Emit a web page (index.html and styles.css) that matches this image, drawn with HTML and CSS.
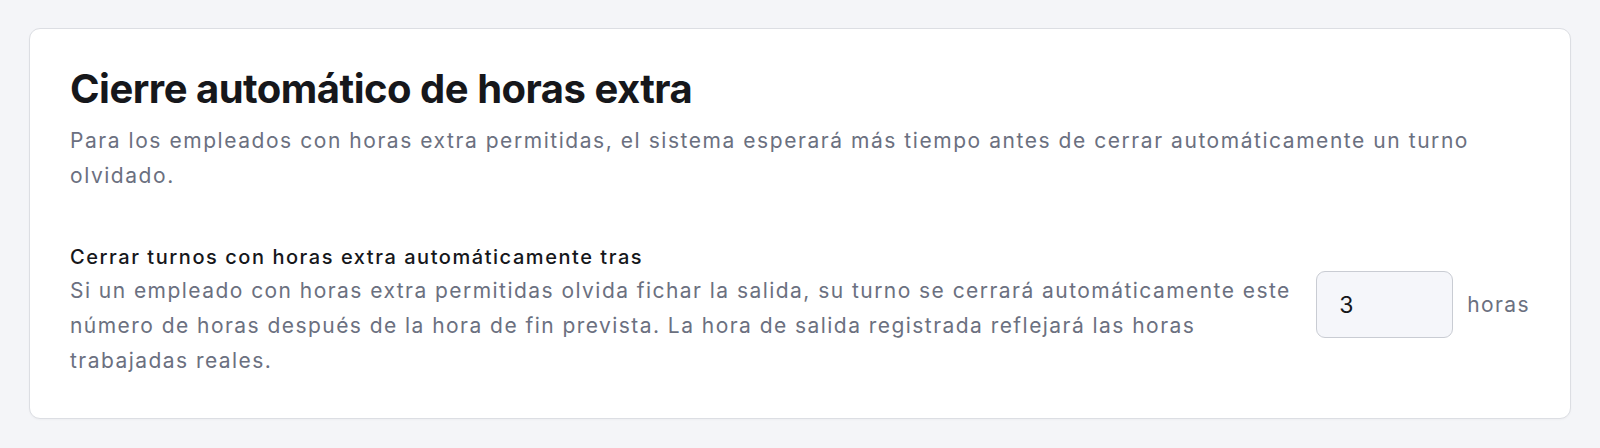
FILE: index.html
```html
<!DOCTYPE html>
<html lang="es">
<head>
    <meta charset="UTF-8">
    <meta name="viewport" content="width=device-width, initial-scale=1.0">
    <title>Cierre automático de horas extra</title>
    <link rel="stylesheet" href="styles.css">
</head>
<body>

    <div class="card">
        <h1>Cierre automático de horas extra</h1>
        <p class="card-desc">Para los empleados con horas extra permitidas, el sistema esperará más tiempo antes de cerrar automáticamente un turno olvidado.</p>

        <div class="setting-row">
            <div class="setting-text">
                <div class="setting-label">Cerrar turnos con horas extra automáticamente tras</div>
                <div class="setting-help">Si un empleado con horas extra permitidas olvida fichar la salida, su turno se cerrará automáticamente este número de horas después de la hora de fin prevista. La hora de salida registrada reflejará las horas trabajadas reales.</div>
            </div>
            <input type="text" class="hours-input" value="3">
            <span class="unit">horas</span>
        </div>
    </div>

</body>
</html>
```

FILE: styles.css
```css
body {
    font-family: 'Inter', 'Liberation Sans', sans-serif;
    background-color: #f4f5f8;
    color: #16171b;
    margin: 0;
    padding: 28px 29px;
}

.card {
    background-color: #fff;
    border: 1px solid #dcdee3;
    border-radius: 11px;
    padding: 36px 40px 40px 40px;
    box-shadow: 0 1px 2px rgba(0, 0, 0, 0.03);
}

h1 {
    margin: 0;
    font-size: 40px;
    font-weight: 700;
    line-height: 48px;
    letter-spacing: -0.5px;
    color: #16171b;
}

.card-desc {
    margin: 10px 0 0 0;
    font-size: 21px;
    line-height: 35px;
    letter-spacing: 1.55px;
    color: #6b7080;
}

.setting-row {
    display: flex;
    align-items: center;
    margin-top: 50px;
}

.setting-text {
    flex: 1;
    margin-right: 12px;
}

.setting-label {
    font-size: 20px;
    font-weight: 500;
    line-height: 28px;
    letter-spacing: 1.55px;
    color: #16171b;
}

.setting-help {
    margin-top: 2px;
    font-size: 21px;
    line-height: 35px;
    letter-spacing: 1.45px;
    color: #6b7080;
}

.hours-input {
    width: 137px;
    height: 67px;
    box-sizing: border-box;
    margin-bottom: 12px;
    border: 1px solid #c9ccd3;
    border-radius: 9px;
    background-color: #f5f6fa;
    padding: 0 22px;
    font-family: inherit;
    font-size: 23px;
    color: #16171b;
    outline: none;
}

.unit {
    margin-left: 14px;
    margin-bottom: 12px;
    font-size: 21px;
    letter-spacing: 1.4px;
    color: #6b7080;
}
```
